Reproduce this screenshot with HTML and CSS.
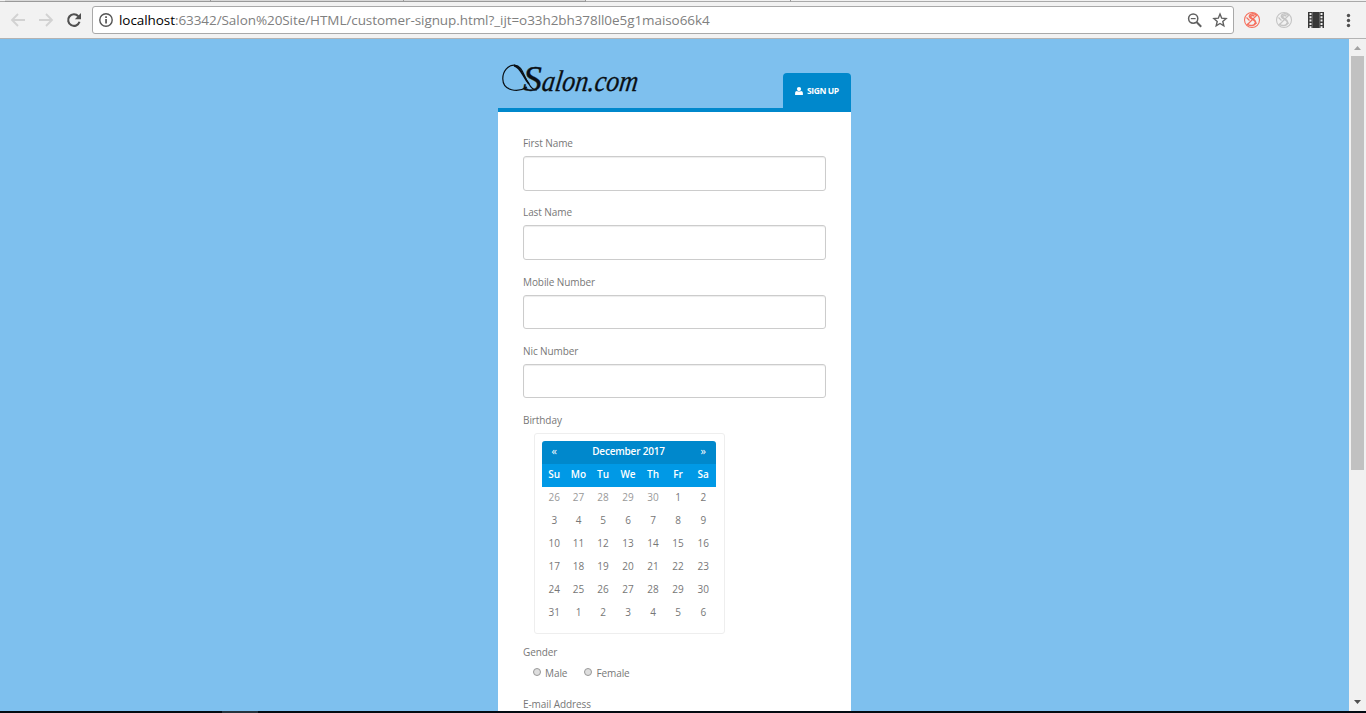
FILE: index.html
```
<!DOCTYPE html>
<html lang="en">
<head>
<meta charset="utf-8">
<title>Sign Up</title>
<link rel="stylesheet" href="styles.css">
</head>
<body>
<div class="window">
  <div class="tabs"><i class="tab tab-a"></i><i class="tab tab-b"></i><i class="tab tab-c"></i><i class="gap"></i><i class="tab-active"></i></div>
  <header class="toolbar">
    <svg class="nav" width="92" height="36" viewBox="0 3 92 36" fill="none">
      <path d="M25 20H12M18 14l-6 6 6 6M39 20h13M46 14l6 6-6 6" stroke="#d2d2d2" stroke-width="1.8"/>
      <path d="M78.3 16.2A5.8 5.8 0 1 0 79.5 21.8" stroke="#505050" stroke-width="2.1"/>
      <path d="M81 13v6.2h-6.2z" fill="#505050"/>
    </svg>
    <div class="address">
      <svg class="info" width="16" height="16" viewBox="0 0 16 16"><circle cx="8" cy="8" r="6.2" fill="none" stroke="#555" stroke-width="1.4"/><path d="M7.2 4.3h1.7v1.7H7.2zM7.2 7h1.7v4.6H7.2z" fill="#555"/></svg>
      <span class="url"><b>localhost</b>:63342/Salon%20Site/HTML/customer-signup.html?_ijt=o33h2bh378ll0e5g1maiso66k4</span>
      <svg width="50" height="26" viewBox="0 0 50 26" fill="none" stroke="#606060">
        <circle cx="10.2" cy="11.6" r="4.6" stroke-width="1.5"/><path d="M7.8 11.6h4.8" stroke-width="1.2"/><path d="M13.500 15l4.700 4.700" stroke-width="2"/>
        <path d="M37 7.1l1.700 4.100 4.400.4-3.300 2.900 1 4.300-3.800-2.300-3.800 2.300 1-4.300-3.300-2.900 4.400-.4z" stroke-width="1.4"/>
      </svg>
    </div>
    <svg class="extensions" width="132" height="36" viewBox="1234 3 132 36">
      <g fill="none" stroke="#f5705e"><circle cx="1252" cy="20" r="7.5" stroke-width="1.1"/><path d="M1256.5 15c-4-2.5-8-.5-7 2 1 2.200 6 2.500 6 5.500 0 3.500-6 4-8.500 1.500M1254.500 16c-3-1-4.500.2-3.500 1.500 1.500 1.700 5.500 2.500 4.500 6" stroke-width="1.500"/><path d="M1247 25l10-10M1246.500 17.500l3 3M1254 24l3-1" stroke-width="1.200"/></g>
      <g fill="none" stroke="#c4c4c4"><circle cx="1284" cy="20" r="7.5" stroke-width="1.1"/><path d="M1288.500 15c-4-2.500-8-.5-7 2 1 2.200 6 2.500 6 5.500 0 3.500-6 4-8.500 1.500M1286.500 16c-3-1-4.500.2-3.500 1.500 1.500 1.700 5.500 2.500 4.500 6" stroke-width="1.500"/><path d="M1279 25l10-10M1278.500 17.500l3 3M1286 24l3-1" stroke-width="1.200"/></g>
      <path d="M1308 12h16v16h-16z" fill="#383838"/>
      <path d="M1310.500 13v15M1321.500 13v15" stroke="#f2f2f2" stroke-width="2" stroke-dasharray="2 1.300"/>
      <path d="M1312.500 12v16M1319.500 12v16" stroke="#777" stroke-width=".6"/>
      <g fill="#505050"><circle cx="1348.500" cy="15.500" r="1.700"/><circle cx="1348.500" cy="20.500" r="1.700"/><circle cx="1348.500" cy="25.500" r="1.700"/></g>
    </svg>
  </header>
  <div class="viewport">
    <main class="page">
      <section class="signup">
        <div class="brand-row">
          <svg class="logo" width="150" height="45" viewBox="498 58 150 45" role="img" aria-label="Salon.com">
            <path d="M527 87C518 93 503 91 502.800 79C502.600 71 508 65 514.500 65.200C523 65.500 523 76 529 84C531 88 533 90 537 90" fill="none" stroke="#0a1015" stroke-width="1.200"/>
            <path d="M514 65.500C521 67 523 77 529 84" fill="none" stroke="#0a1015" stroke-width="1.900"/>
            <text class="logo-text" x="523" y="90.500" font-size="35" textLength="19" lengthAdjust="spacingAndGlyphs">S</text>
            <g transform="translate(541 90.500) skewX(-8)"><text class="logo-text" x="0" y="0" font-size="30" textLength="96" lengthAdjust="spacingAndGlyphs">alon.com</text></g>
          </svg>
          <div class="signup-tab">
            <svg width="8" height="8" viewBox="0 0 8 8" fill="#fff"><circle cx="4" cy="2.100" r="2.100"/><path d="M.1 8V6.300C.1 4.800 1 4 2 4c1 .8 3 .8 4 0 1 0 1.900.8 1.900 2.300V8z"/></svg>
            <span>SIGN UP</span>
          </div>
        </div>
        <form class="card">
          <div class="field"><label for="first">First Name</label><input id="first" type="text"></div>
          <div class="field"><label for="last">Last Name</label><input id="last" type="text"></div>
          <div class="field"><label for="mobile">Mobile Number</label><input id="mobile" type="text"></div>
          <div class="field"><label for="nic">Nic Number</label><input id="nic" type="text"></div>
          <div class="label">Birthday</div>
          <div class="calendar">
            <div class="row month"><span class="arrow">«</span><span class="title">December 2017</span><span class="arrow">»</span></div>
            <div class="row days"><span>Su</span><span>Mo</span><span>Tu</span><span>We</span><span>Th</span><span>Fr</span><span>Sa</span></div>
            <div class="row"><span class="old">26</span><span class="old">27</span><span class="old">28</span><span class="old">29</span><span class="old">30</span><span>1</span><span>2</span></div>
            <div class="row"><span>3</span><span>4</span><span>5</span><span>6</span><span>7</span><span>8</span><span>9</span></div>
            <div class="row"><span>10</span><span>11</span><span>12</span><span>13</span><span>14</span><span>15</span><span>16</span></div>
            <div class="row"><span>17</span><span>18</span><span>19</span><span>20</span><span>21</span><span>22</span><span>23</span></div>
            <div class="row"><span>24</span><span>25</span><span>26</span><span>27</span><span>28</span><span>29</span><span>30</span></div>
            <div class="row"><span>31</span><span>1</span><span>2</span><span>3</span><span>4</span><span>5</span><span>6</span></div>
          </div>
          <div class="label">Gender</div>
          <div class="genders"><label class="choice"><i class="radio"></i>Male</label><label class="choice"><i class="radio"></i>Female</label></div>
          <div class="label">E-mail Address</div>
        </form>
      </section>
    </main>
    <aside class="scrollbar">
      <svg width="17" height="17" viewBox="0 0 17 17"><path d="M5 11l3.500-4 3.500 4z" fill="#a3a3a3"/></svg>
      <i class="thumb"></i>
      <svg width="17" height="17" viewBox="0 0 17 17"><path d="M5 6h7l-3.500 4z" fill="#505050"/></svg>
    </aside>
  </div>
  <footer class="taskbar"><i></i></footer>
</div>
</body>
</html>
```
FILE: styles.css
```
* { box-sizing: border-box; }
body { margin: 0; overflow: hidden; font-family: "Open Sans", sans-serif; }
.window { width: 1366px; height: 713px; display: flex; flex-direction: column; }
.tabs { height: 2px; flex: none; display: flex; background: #f1f1f1; border-bottom: 1px solid #a9a9a9; padding-left: 5px; }
.tab { height: 2px; background: #d9d9d9; border-right: 1px solid #999; border-bottom: 1px solid #999; }
.tab-a { width: 206px; }
.tab-b { width: 193px; }
.tab-c { width: 182px; }
.gap { width: 204px; }
.tab-active { flex: 1; height: 2px; background: #f1f1f1; border-left: 1px solid #999; border-bottom: 1px solid #a9a9a9; }
.toolbar { height: 37px; flex: none; display: flex; background: #f2f2f2; border-bottom: 1px solid #b3b3b3; }
.nav, .extensions { flex: none; margin-top: 1px; }
.address { width: 1142px; height: 28px; margin-top: 4px; border: 1px solid #a9a9a9; border-radius: 3px; background: #fff; display: flex; align-items: center; }
.info { margin-left: 5px; flex: none; }
.url { flex: 1; margin-left: 5px; font-size: 13.500px; letter-spacing: -.07px; line-height: 26px; color: #808080; white-space: nowrap; }
.url b { font-weight: 400; color: #000; }
.viewport { height: 672px; flex: none; display: flex; }
.page { flex: 1; background: #7ec0ee; overflow: hidden; }
.signup { width: 353px; margin-left: 498px; padding-top: 19px; }
.brand-row { height: 54px; display: flex; justify-content: space-between; align-items: flex-end; border-bottom: 4px solid #0088cc; border-radius: 3px 0 0 0; }
.logo { margin-bottom: 5px; overflow: visible; }
.logo-text { font-family: "Liberation Serif", serif; font-style: italic; fill: #0a1015; stroke: #0a1015; stroke-width: .3px; }
.signup-tab { width: 68px; height: 35px; background: #0088cc; border-radius: 4px 4px 0 0; color: #fff; font-size: 8.500px; font-weight: 700; letter-spacing: -.4px; display: flex; align-items: center; gap: 4px; padding-left: 12px; white-space: nowrap; }
.card { height: 640px; background: #fff; padding: 22px 25px 0; color: #777; font-size: 10px; letter-spacing: -.08px; }
.field { height: 69.300px; }
.field label, .label { display: block; height: 20px; line-height: 18.600px; }
.field input { display: block; width: 303px; height: 34.600px; margin-top: 2px; border: 1px solid #ccc; border-radius: 3px; background: #fff; box-shadow: inset 0 1px 1px rgba(0,0,0,.075); }
.calendar { width: 191px; height: 201px; margin: 1.800px 0 9px 11px; padding: 7px; border: 1px solid #eee; border-radius: 3px; }
.row { width: 174px; height: 23px; line-height: 20px; display: grid; grid-template-columns: 24.500px 24px 25px 25px 25px 25px 25.500px; text-align: center; letter-spacing: 0; }
.month { background: #0088cc; color: #fff; border-radius: 3px 3px 0 0; }
.arrow { font-size: 11px; }
.title { grid-column: span 5; font-weight: 600; letter-spacing: -.2px; }
.days { background: #0099e6; color: #fff; font-weight: 600; line-height: 21px; }
.old { color: #999; }
.genders { display: flex; gap: 17px; height: 32px; padding: 3px 0 0 10px; }
.choice { display: flex; height: 16px; line-height: 14px; gap: 4px; }
.radio { width: 8px; height: 8px; margin-top: 2px; border: 1px solid #999; border-radius: 50%; background: #dedede; }
.scrollbar { width: 17px; display: flex; flex-direction: column; background: #f1f1f1; }
.scrollbar svg { flex: none; }
.scrollbar svg:last-child { margin-top: auto; }
.thumb { width: 13px; height: 414px; margin-left: 2px; background: #c1c1c1; }
.taskbar { height: 2px; background: #040b12; padding-left: 222px; }
.taskbar i { display: block; width: 36px; height: 2px; background: #26333d; }
```
